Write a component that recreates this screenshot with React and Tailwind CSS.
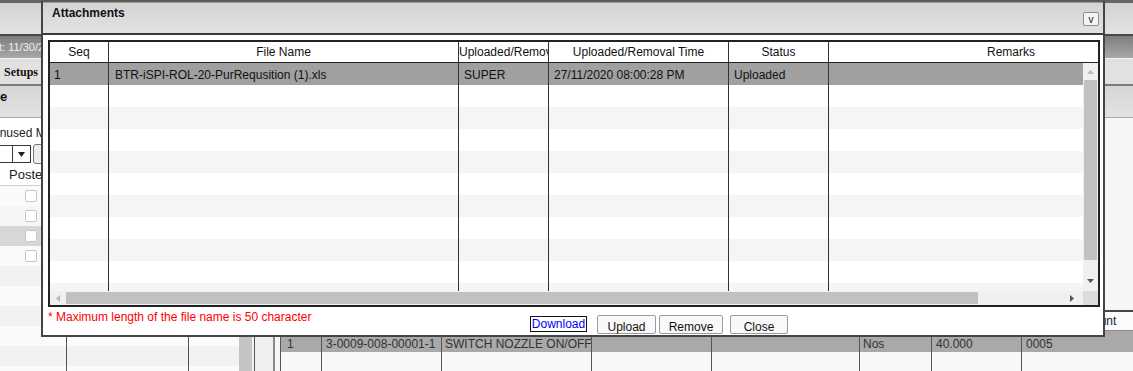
import React from "react";

const headCols = [
  { w: "w-[59px]", label: "Seq", cls: "justify-center" },
  { w: "w-[350px]", label: "File Name", cls: "justify-center" },
  { w: "w-[90px]", label: "Uploaded/Removal By", cls: "justify-start" },
  { w: "w-[180px]", label: "Uploaded/Removal Time", cls: "justify-center" },
  { w: "w-[100px]", label: "Status", cls: "justify-center" },
  { w: "w-[364px]", label: "Remarks", cls: "justify-center" },
];

const bodyCols = [
  { w: "w-[59px]", pad: "pl-[4px]" },
  { w: "w-[350px]", pad: "pl-[6px]" },
  { w: "w-[90px]", pad: "pl-[5px]" },
  { w: "w-[180px]", pad: "pl-[5px]" },
  { w: "w-[100px]", pad: "pl-[5px]" },
  { w: "w-[364px]", pad: "pl-[5px]" },
];

const attachment = ["1", "BTR-iSPI-ROL-20-PurRequsition (1).xls", "SUPER", "27/11/2020 08:00:28 PM", "Uploaded", ""];

// rows of the material grid behind the dialog
const matCols = [
  { w: "w-[41px]", pad: "pl-[6px]", border: true },
  { w: "w-[120px]", pad: "pl-[4px]", border: true },
  { w: "w-[150px]", pad: "pl-[3px]", border: true },
  { w: "w-[120px]", pad: "pl-[4px]", border: true },
  { w: "w-[148px]", pad: "pl-[4px]", border: true },
  { w: "w-[72px]", pad: "pl-[3px]", border: true },
  { w: "w-[90px]", pad: "pl-[4px]", border: true },
  { w: "flex-1", pad: "pl-[4px]", border: false },
];
const matRow = ["1", "3-0009-008-00001-1", "SWITCH NOZZLE ON/OFF", "", "", "Nos", "40.000", "0005"];

function Checkbox() {
  return <span className="block w-[12px] h-[12px] border border-[#c6c6c6] rounded-[2px] bg-white" />;
}

function LeftGrid() {
  const stripes = ["bg-[#fafafa]", "bg-[#f6f6f6]", "bg-[#d7d7d7]", "bg-[#fafafa]", "bg-[#f2f2f2]", "bg-[#fafafa]", "bg-[#f2f2f2]", "bg-[#fafafa]", "bg-[#f2f2f2]", "bg-[#fafafa]"];
  return (
    <div className="w-[255px] shrink-0 flex flex-col bg-white">
      <div className="h-[25px] pt-[4px] flex items-center whitespace-nowrap overflow-hidden text-[12px] text-[#222]">
        <span className="-ml-[9px]">Unused Material</span>
      </div>
      <div className="h-[22px] flex items-center">
        <div className="flex h-[18px] w-[31px] border-y border-r border-[#3a3a3a] bg-white">
          <div className="w-[13px] border-r border-[#3a3a3a]" />
          <div className="flex-1 flex items-center justify-center">
            <svg width="7" height="5" viewBox="0 0 7 5"><polygon points="0,0 7,0 3.5,5" fill="#222" /></svg>
          </div>
        </div>
        <div className="ml-[2px] h-[20px] w-[40px] rounded-[3px] border border-[#777] bg-[#ededed]" />
      </div>
      <div className="h-[21px] flex border-b border-[#cfcfcf] bg-white text-[13px] text-[#222]">
        <div className="w-[67px] pl-[9px] flex items-center border-r border-[#555]">Posted</div>
        <div className="w-[122px] border-r border-[#555]" />
        <div className="flex-1" />
      </div>
      <div className="flex-1 flex min-h-0 overflow-hidden">
        <div className="w-[239px] flex flex-col">
          {stripes.map((s, i) => (
            <div key={i} className={`h-[20px] shrink-0 flex ${s}`}>
              <div className="w-[67px] pl-[25px] flex items-center border-r border-[#555]">{i < 4 && <Checkbox />}</div>
              <div className="w-[122px] border-r border-[#555]" />
              <div className="flex-1" />
            </div>
          ))}
        </div>
        <div className="w-[16px] flex border-r border-[#555] bg-[#f4f4f4]">
          <div className="w-[13px] bg-[#c4c4c4]" />
        </div>
      </div>
    </div>
  );
}

function RightArea() {
  return (
    <div className="flex-1 flex flex-col pl-[5px] bg-[#f6f6f6]">
      <div className="h-[192px] shrink-0" />
      <div className="flex-1 flex flex-col border-t-2 border-t-[#454545] border-l border-l-[#555]">
        <div className="h-[19px] flex border-b border-[#8a8a8a] bg-[#fbfbfb] text-[#222]">
          {matCols.map((c, i) => (
            <div key={i} className={`${c.w} shrink-0 flex items-center whitespace-nowrap overflow-hidden ${i === 7 ? "pl-[53px]" : c.pad}`}>
              {i === 7 ? "Amount" : ""}
            </div>
          ))}
        </div>
        <div className="h-[21px] flex bg-[#a9a9a9] text-[#333]">
          {matCols.map((c, i) => (
            <div key={i} className={`${c.w} shrink-0 flex items-end pb-[1px] whitespace-nowrap overflow-hidden ${c.pad} ${c.border ? "border-r border-[#555]" : ""}`}>
              {matRow[i]}
            </div>
          ))}
        </div>
        <div className="flex-1 flex bg-[#f8f8f8]">
          {matCols.map((c, i) => (
            <div key={i} className={`${c.w} shrink-0 ${c.border ? "border-r border-[#555]" : ""}`} />
          ))}
        </div>
      </div>
    </div>
  );
}

function BackgroundPage() {
  return (
    <div className="flex flex-col h-full">
      <div className="h-[3px] shrink-0 bg-[#666]" />
      <div className="h-[31px] shrink-0 bg-gradient-to-b from-[#d3d3d3] to-[#e2e2e2]" />
      <div className="h-[2px] shrink-0 bg-[#4a4a4a]" />
      <div className="h-[22px] shrink-0 flex items-center bg-gradient-to-b from-[#7e7e7e] to-[#a8a8a8] text-[11px] text-[#efefef] whitespace-nowrap">
        <span className="-ml-[1px]">t: 11/30/2020</span>
      </div>
      <div className="h-[26px] shrink-0 flex items-center border-t border-[#f2f2f2] bg-[#e3e0e0] pl-[4px] font-['Liberation_Serif',serif] font-bold text-[12px] text-[#111]">
        Setups
      </div>
      <div className="h-[2px] shrink-0 bg-[#7a7a7a]" />
      <div className="h-[32px] shrink-0 pt-[4px] border-b border-[#a8a8a8] bg-gradient-to-b from-[#d6d6d6] to-[#e2e2e2] font-bold text-[13px] text-[#111] whitespace-nowrap">
        e
      </div>
      <div className="flex-1 flex min-h-0">
        <LeftGrid />
        <div className="w-[18px] shrink-0 bg-[#efefef]" />
        <div className="w-[2px] shrink-0 bg-[#8a8a8a]" />
        <RightArea />
      </div>
    </div>
  );
}

function AttachmentsDialog() {
  const rows = Array.from({ length: 11 }, (_, i) => i);
  return (
    <div className="absolute left-[41px] top-0 w-[1064px] h-[337px] flex flex-col bg-white border-2 border-[#444] border-t-[#5c5c5c]">
      <div className="h-[33px] shrink-0 flex items-start justify-between border-t border-[#9c9c9c] border-b-2 border-b-[#3a3a3a] bg-gradient-to-b from-[#d4d4d4] to-[#e2e2e2]">
        <span className="pl-[9px] pt-[3px] font-bold text-[#111]">Attachments</span>
        <button className="mt-[9px] mr-[4px] w-[16px] h-[14px] flex items-end justify-center border border-[#8c8c8c] rounded-[2px] bg-[#f4f4f4] text-[10px] leading-[10px] text-[#222]">
          v
        </button>
      </div>

      <div className="ml-[5px] mt-[5px] w-[1052px] h-[267px] shrink-0 flex flex-col border-2 border-[#222] overflow-hidden">
        <div className="h-[21px] shrink-0 flex border-b border-[#222] bg-white text-[#111]">
          {headCols.map((c, i) => (
            <div key={i} className={`${c.w} shrink-0 flex items-center whitespace-nowrap overflow-hidden ${c.cls} ${i < 5 ? "border-r border-[#333]" : ""}`}>
              {c.label}
            </div>
          ))}
        </div>

        <div className="h-[228px] shrink-0 flex">
          <div className="w-[1033px] overflow-hidden flex flex-col">
            {rows.map((r) => (
              <div key={r} className={`h-[22px] shrink-0 flex ${r === 0 ? "bg-[#a0a0a0]" : r % 2 === 0 ? "bg-[#f5f5f5]" : "bg-white"}`}>
                {bodyCols.map((c, i) => (
                  <div key={i} className={`${c.w} shrink-0 flex items-center pt-[2px] whitespace-nowrap overflow-hidden ${c.pad} ${i < 5 ? "border-r border-[#333]" : ""}`}>
                    {r === 0 ? attachment[i] : ""}
                  </div>
                ))}
              </div>
            ))}
          </div>
          <div className="w-[15px] flex flex-col items-center bg-[#f0f0f0]">
            <div className="h-[17px] flex items-center justify-center">
              <svg width="7" height="4" viewBox="0 0 7 4"><polygon points="0,4 7,4 3.5,0" fill="#b8b8b8" /></svg>
            </div>
            <div className="w-[13px] h-[180px] bg-[#c1c1c1]" />
            <div className="flex-1 flex items-end justify-center pb-[8px]">
              <svg width="7" height="4" viewBox="0 0 7 4"><polygon points="0,0 7,0 3.5,4" fill="#555" /></svg>
            </div>
          </div>
        </div>

        <div className="h-[14px] shrink-0 flex bg-[#f0f0f0]">
          <div className="w-[1033px] flex items-center">
            <div className="w-[16px] flex justify-center">
              <svg width="4" height="7" viewBox="0 0 4 7"><polygon points="4,0 4,7 0,3.5" fill="#b8b8b8" /></svg>
            </div>
            <div className="w-[912px] h-[12px] bg-[#c1c1c1]" />
            <div className="flex-1 flex justify-end pr-[9px]">
              <svg width="4" height="7" viewBox="0 0 4 7"><polygon points="0,0 0,7 4,3.5" fill="#555" /></svg>
            </div>
          </div>
          <div className="flex-1 bg-[#dcdcdc]" />
        </div>
      </div>

      <div className="flex-1 grid grid-cols-[487px_1fr]">
        <div className="pl-[5px] pt-[3px] text-[#ff0000] whitespace-nowrap">* Maximum length of the file name is 50 character</div>
        <div className="flex items-start">
          <button className="mt-[9px] w-[57px] h-[16px] flex items-center justify-center border border-[#111] bg-white text-[#0000ff]">Download</button>
          <button className="ml-[10px] mt-[8px] w-[59px] h-[19px] pt-[4px] flex items-center justify-center border border-[#9b9b9b] rounded-[2px] bg-[#f9f9f9] text-[#111]">Upload</button>
          <button className="ml-[3px] mt-[8px] w-[64px] h-[19px] pt-[4px] flex items-center justify-center border border-[#9b9b9b] rounded-[2px] bg-[#f9f9f9] text-[#111]">Remove</button>
          <button className="ml-[7px] mt-[8px] w-[58px] h-[19px] pt-[4px] flex items-center justify-center border border-[#9b9b9b] rounded-[2px] bg-[#f9f9f9] text-[#111]">Close</button>
        </div>
      </div>
    </div>
  );
}

export default function App() {
  return (
    <div className="relative w-[1133px] h-[371px] overflow-hidden bg-[#f7f7f7] font-['Liberation_Sans',Arial,sans-serif] text-[12px] leading-[14px] text-[#111]">
      <BackgroundPage />
      <AttachmentsDialog />
    </div>
  );
}
